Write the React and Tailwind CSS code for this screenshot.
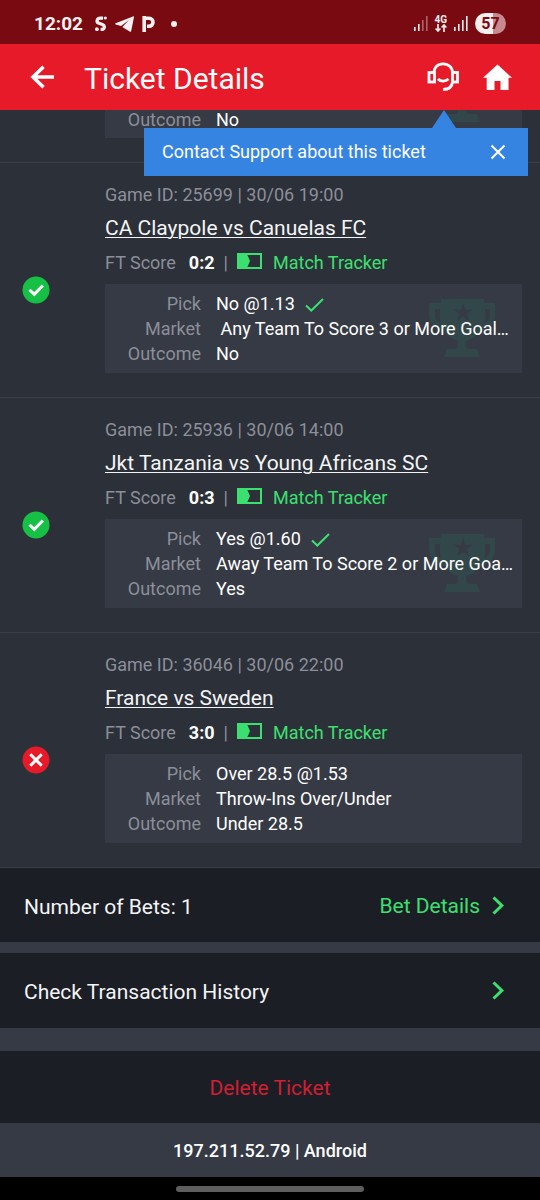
import React, { useState } from 'react';

const matches = [
  {
    id: '25699',
    date: '30/06 19:00',
    teams: 'CA Claypole vs Canuelas FC',
    score: '0:2',
    pick: 'No @1.13',
    market: '\u00a0Any Team To Score 3 or More Goal…',
    outcome: 'No',
    won: true,
  },
  {
    id: '25936',
    date: '30/06 14:00',
    teams: 'Jkt Tanzania vs Young Africans SC',
    score: '0:3',
    pick: 'Yes @1.60',
    market: 'Away Team To Score 2 or More Goa…',
    outcome: 'Yes',
    won: true,
  },
  {
    id: '36046',
    date: '30/06 22:00',
    teams: 'France vs Sweden',
    score: '3:0',
    pick: 'Over 28.5 @1.53',
    market: 'Throw-Ins Over/Under',
    outcome: 'Under 28.5',
    won: false,
  },
];

function SignalIcon({ weak }) {
  return (
    <svg width="14" height="15" viewBox="0 0 14 15" fill="#fbe9ea">
      <rect x="0" y="11" width="1.6" height="4" />
      <rect x="4" y="8" width="1.6" height="7" />
      <rect x="8" y="4" width="1.6" height="11" opacity={weak ? 0.4 : 1} />
      <rect x="12" y="0" width="1.6" height="15" opacity={weak ? 0.4 : 1} />
    </svg>
  );
}

function StatusBar() {
  return (
    <div className="flex h-11 items-center bg-[#7a0a12] pt-[3px] pr-[34px] pl-[34px] text-[#fdf0f0]">
      <span className="text-[19px] leading-6 font-bold">12:02</span>
      <svg className="ml-3" width="12" height="16" viewBox="0 0 12 16" fill="none">
        <path d="M8 2.2H5.6C1.5 2.2 1 6.2 4 7.2L7.4 8.6C10.6 10 9.6 13.4 6.4 13.4H5.6" stroke="#fdf0f0" strokeWidth="3.2" />
        <circle cx="10.3" cy="2" r="1.6" fill="#fdf0f0" />
        <circle cx="1.9" cy="13.2" r="1.9" fill="#fdf0f0" />
      </svg>
      <svg className="ml-2" width="19" height="16" viewBox="0 0 19 16" fill="#fdf0f0">
        <path d="M18.5 0.2 0.6 7.2C-0.2 7.6 0 8.2 0.6 8.4L6 10 14 3.9 7.3 10.9 14.6 15.6C15.3 16 16 15.7 16.2 14.9L19 0.9C19 0.3 18.8 0.1 18.5 0.2Z" />
      </svg>
      <svg className="ml-2" width="13" height="16" viewBox="0 0 13 16" fill="none" stroke="#fdf0f0" strokeWidth="3.6">
        <path d="M2.2 16V0" />
        <path d="M3 2.3H7C12.3 2.3 12.3 10.2 7 10.2H5" />
      </svg>
      <span className="ml-4 size-[6px] rounded-full bg-[#fdf0f0]" />
      <div className="ml-auto flex items-center">
        <SignalIcon weak />
        <div className="ml-[6px] flex flex-col items-center">
          <span className="text-[10px] leading-[9px] font-bold">4G</span>
          <svg width="12" height="8" viewBox="0 0 12 8" fill="none" stroke="#fdf0f0" strokeWidth="1.6">
            <path d="M3 0V7M0.6 4.5 3 7 5.4 4.5M9 8V1M6.6 3.5 9 1 11.4 3.5" />
          </svg>
        </div>
        <span className="ml-[7px]">
          <SignalIcon />
        </span>
        <span className="ml-[7px] flex h-[21px] w-[31px] items-center justify-center rounded-full bg-[linear-gradient(90deg,#faeeee_57%,#c98a8f_57%)] text-[16px] leading-5 font-bold text-[#7a0a12]">
          57
        </span>
      </div>
    </div>
  );
}

function SupportTip({ onClose }) {
  return (
    <div className="absolute top-full right-3 flex flex-col items-end">
      <svg className="mr-[72px]" width="24" height="18" viewBox="0 0 24 18" fill="#3684e2">
        <path d="M12 0 24 18H0Z" />
      </svg>
      <div className="flex h-12 w-96 items-center justify-between bg-[#3684e2] pr-[22px] pl-[18px] text-white">
        <span className="text-[18px] leading-6">Contact Support about this ticket</span>
        <button aria-label="Close" onClick={onClose}>
          <svg width="16" height="16" viewBox="0 0 16 16" fill="none" stroke="white" strokeWidth="2">
            <path d="M1.5 1.5 14.5 14.5M14.5 1.5 1.5 14.5" />
          </svg>
        </button>
      </div>
    </div>
  );
}

function Header() {
  const [tipOpen, setTipOpen] = useState(true);

  return (
    <header className="relative z-10 flex h-[66px] items-center bg-[#e61a28] pr-7 pl-[30px] text-white">
      <button aria-label="Back">
        <svg width="24" height="24" viewBox="0 0 24 24" fill="none" stroke="white" strokeWidth="3.6">
          <path d="M24 12H3M13.5 1.8 3 12 13.5 22.2" />
        </svg>
      </button>
      <h1 className="ml-[30px] pt-1 text-[30px] leading-9">Ticket Details</h1>
      <button className="ml-auto" aria-label="Contact support">
        <svg width="32" height="30" viewBox="0 0 32 30" fill="none" stroke="white" strokeWidth="2.8">
          <path d="M7 11C7 5.5 10.5 1.8 16 1.8S25.5 5.5 25.5 11" />
          <rect x="2" y="10.5" width="5.5" height="9.5" />
          <rect x="25.5" y="10.5" width="5" height="9.5" />
          <path d="M25.5 20C25 25 21.5 27.5 16 27.5" />
          <path d="M11 17C13.5 19.8 18.5 19.8 21.5 17" />
        </svg>
      </button>
      <button className="ml-6" aria-label="Home">
        <svg width="29" height="26" viewBox="0 0 29 26" fill="white">
          <path d="M14.5 0.5 29 13.8H25.5V26H17.5V17H11.5V26H3.7V13.8H0Z" />
        </svg>
      </button>
      {tipOpen && <SupportTip onClose={() => setTipOpen(false)} />}
    </header>
  );
}

function Trophy() {
  return (
    <svg className="absolute right-[27px] bottom-4" width="66" height="58" viewBox="0 0 66 58" fill="#32474a">
      <path
        fillRule="evenodd"
        d="M12 0H55V4H66V16C66 25 59 31 51 32C48 37 43 40 37 42V46C37 49 39 50 43 50H48L51 58H15L18 50H24C28 50 29 49 29 46V42C23 40 18 37 15 32C7 31 0 25 0 16V4H12ZM11 10H6V16C6 20 8 23 12 24C11 21 11 19 11 16ZM56 10V16C56 19 56 21 55 24C59 23 61 20 61 16V10ZM34 4 36.3 10.8H43.5L37.7 15 40 22 34 17.7 28 22 30.3 15 24.5 10.8H31.7Z"
      />
    </svg>
  );
}

function ResultIcon({ won }) {
  return (
    <svg width="28" height="28" viewBox="0 0 28 28" fill="none" stroke="white" strokeWidth="3">
      <circle cx="14" cy="14" r="13.5" stroke="none" fill={won ? '#16c045' : '#e61a28'} />
      {won ? <path d="M7.5 13.7 12.3 18.4 20.8 9.5" /> : <path d="M8.3 8.3 19.7 19.7M19.7 8.3 8.3 19.7" />}
    </svg>
  );
}

function Row({ label, children }) {
  return (
    <div className="grid grid-cols-[96px_minmax(0,1fr)] gap-x-[15px]">
      <dt className="text-right text-[#8b8f98]">{label}</dt>
      <dd className="whitespace-nowrap text-white">{children}</dd>
    </div>
  );
}

function MatchItem({ match }) {
  return (
    <li className="flex items-center border-b border-[#3a3e48] pt-5 pr-[18px] pb-6">
      <div className="w-[105px] shrink-0 pt-6 pl-[22px]">
        <ResultIcon won={match.won} />
      </div>
      <div className="min-w-0 flex-1">
        <p className="text-[18px] leading-6 text-[#8b8f98]">
          Game ID: {match.id} | {match.date}
        </p>
        <a href="#match" className="mt-[7px] block text-[21px] leading-7 text-[#f3f4f6] underline decoration-1 underline-offset-2">
          {match.teams}
        </a>
        <div className="mt-[9px] flex items-center text-[18px] leading-6 text-[#8b8f98]">
          <span>FT Score</span>
          <span className="ml-[13px] font-bold text-white">{match.score}</span>
          <span className="ml-[9px]">|</span>
          <a href="#tracker" className="ml-[9px] flex items-center gap-[11px] text-[#3ce070]">
            <svg className="mb-1" width="25" height="16" viewBox="0 0 25 16" fill="none">
              <rect x="1" y="1" width="23" height="14" stroke="#3ce070" strokeWidth="2" />
              <path d="M0 0H9.5L13 8 9.5 16H0Z" fill="#3ce070" />
            </svg>
            Match Tracker
          </a>
        </div>
        <dl className="relative mt-[9px] bg-[#363a45] py-[7px] pr-[6px] text-[18px] leading-[25px]">
          {match.won && <Trophy />}
          <div className="relative">
            <Row label="Pick">
              {match.pick}
              {match.won && (
                <svg className="ml-[10px] inline" width="19" height="14" viewBox="0 0 19 14" fill="none" stroke="#3ce070" strokeWidth="2">
                  <path d="M1 7.5 6.3 12.5 18 1" />
                </svg>
              )}
            </Row>
            <Row label="Market">{match.market}</Row>
            <Row label="Outcome">{match.outcome}</Row>
          </div>
        </dl>
      </div>
    </li>
  );
}

function Chevron() {
  return (
    <svg width="12" height="19" viewBox="0 0 12 19" fill="none" stroke="#3ce070" strokeWidth="3">
      <path d="M1.5 1.5 9.8 9.5 1.5 17.5" />
    </svg>
  );
}

export default function App() {
  return (
    <div className="flex min-h-screen flex-col bg-[#363a45] font-[Roboto,sans-serif]">
      <StatusBar />
      <Header />

      <ul className="bg-[#2c3038]">
        {/* tail of the previous match, scrolled under the header */}
        <li className="border-b border-[#3a3e48] pr-[18px] pb-6 pl-[105px]">
          <dl className="relative bg-[#363a45] pb-2 text-[18px] leading-5">
            <Trophy />
            <Row label="Outcome">No</Row>
          </dl>
        </li>
        {matches.map((match) => (
          <MatchItem key={match.id} match={match} />
        ))}
      </ul>

      <div className="flex h-[74px] items-center justify-between bg-[#1b1e25] pr-9 pl-6 text-[21px] leading-7">
        <span className="pt-1 text-[#f3f4f6]">Number of Bets: 1</span>
        <button className="flex items-center gap-3 text-[#3ce070]">
          <span className="pt-0.5">Bet Details</span>
          <Chevron />
        </button>
      </div>

      <button className="mt-[11px] flex h-[75px] items-center justify-between bg-[#1b1e25] pr-9 pl-6 text-[21px] leading-7 text-[#f3f4f6]">
        <span className="pt-0.5">Check Transaction History</span>
        <Chevron />
      </button>

      <button className="mt-[23px] h-[72px] bg-[#1b1e25] pt-0.5 text-[21px] leading-7 text-[#d01f33]">Delete Ticket</button>

      <footer>
        <p className="pt-4 pb-[14px] text-center text-[18px] leading-6 font-medium text-white">197.211.52.79 | Android</p>
        <div className="flex h-6 items-center justify-center bg-black">
          <span className="h-[6px] w-[188px] rounded-full bg-[#5e5e5e]" />
        </div>
      </footer>
    </div>
  );
}
